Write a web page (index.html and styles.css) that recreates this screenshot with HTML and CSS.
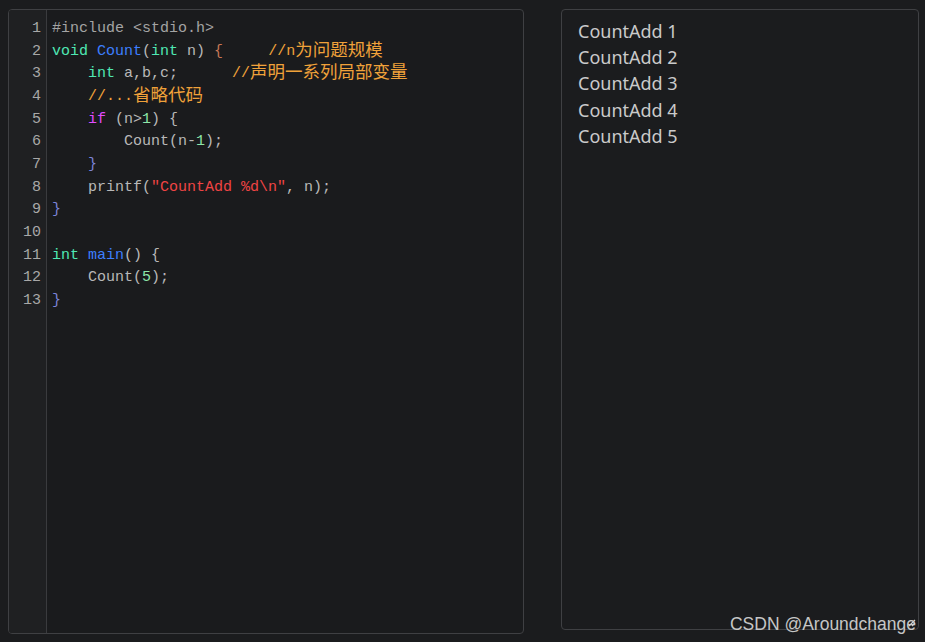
FILE: index.html
```html
<!DOCTYPE html>
<html lang="zh-CN">
<head>
    <meta charset="UTF-8">
    <title>递归调用示例</title>
    <link rel="stylesheet" href="styles.css">
</head>
<body>
    <div class="workspace">
        <div class="editor">
            <div class="gutter">
                <div>1</div><div>2</div><div>3</div><div>4</div><div>5</div>
                <div>6</div><div>7</div><div>8</div><div>9</div><div>10</div>
                <div>11</div><div>12</div><div>13</div>
            </div>
            <div class="code">
                <div class="line"><span class="pp">#include &lt;stdio.h&gt;</span></div>
                <div class="line"><span class="kw">void</span> <span class="fn">Count</span>(<span class="kw">int</span> n) <span class="br1">{</span>     <span class="cm">//n<span class="cjk">为问题规模</span></span></div>
                <div class="line">    <span class="kw">int</span> a,b,c;      <span class="cm">//<span class="cjk">声明一系列局部变量</span></span></div>
                <div class="line">    <span class="cm">//...<span class="cjk">省略代码</span></span></div>
                <div class="line">    <span class="ctl">if</span> (n&gt;<span class="num">1</span>) {</div>
                <div class="line">        Count(n-<span class="num">1</span>);</div>
                <div class="line">    <span class="br2">}</span></div>
                <div class="line">    printf(<span class="str">"CountAdd %d\n"</span>, n);</div>
                <div class="line"><span class="br2">}</span></div>
                <div class="line"></div>
                <div class="line"><span class="kw">int</span> <span class="fn">main</span>() {</div>
                <div class="line">    Count(<span class="num">5</span>);</div>
                <div class="line"><span class="br2">}</span></div>
            </div>
        </div>

        <div class="console">
            <div class="output">
                <div>CountAdd 1</div>
                <div>CountAdd 2</div>
                <div>CountAdd 3</div>
                <div>CountAdd 4</div>
                <div>CountAdd 5</div>
            </div>
            <div class="watermark">CSDN @Aroundchange</div>
            <svg class="grip" width="8" height="8" viewBox="0 0 8 8">
                <path d="M7 1 L1 7 M7 4 L4 7" stroke="#d0d0d0" stroke-width="1.2" fill="none"/>
            </svg>
        </div>
    </div>
</body>
</html>
```

FILE: styles.css
```css
body, html {
    margin: 0;
    padding: 0;
    height: 100%;
    background-color: #1b1c1e;
    overflow: hidden;
}

.workspace {
    display: flex;
    align-items: flex-start;
    gap: 37px;
    padding: 9px 0 0 8px;
}

.editor {
    display: flex;
    width: 514px;
    height: 623px;
    border: 1px solid #3f4043;
    border-radius: 4px;
    background-color: #1a1b1d;
    overflow: hidden;
}

.gutter {
    width: 38px;
    flex-shrink: 0;
    background-color: #1f2022;
    border-right: 1px solid #3a3b3e;
    padding: 8px 5px 0 0;
    box-sizing: border-box;
    text-align: right;
    font-family: "Liberation Mono", monospace;
    font-size: 15px;
    line-height: 22.67px;
    color: #a8a8a8;
}

.gutter div {
    height: 22.67px;
}

.code {
    padding: 8px 0 0 5px;
    font-family: "Liberation Mono", monospace;
    font-size: 15px;
    line-height: 22.67px;
    color: #b8b8b8;
}

.line {
    height: 22.67px;
    white-space: pre;
}

.cjk {
    font-family: "Noto Sans CJK SC", sans-serif;
    font-size: 17.5px;
    line-height: 0;
    vertical-align: -1px;
}

.pp { color: #a4a4a4; }
.kw { color: #4fe8b4; }
.fn { color: #3d7fff; }
.ctl { color: #e04cff; }
.num { color: #8ee6a8; }
.str { color: #f04444; }
.cm { color: #f0a23a; }
.br1 { color: #c77755; }
.br2 { color: #7c84d8; }

/* Output window */
.console {
    position: relative;
    width: 356px;
    height: 619px;
    border: 1px solid #3f4043;
    border-radius: 4px;
    background-color: #1b1c1e;
}

.output {
    padding: 8px 0 0 16px;
    font-family: "Noto Sans", sans-serif;
    font-size: 18px;
    line-height: 26.2px;
    color: #cacaca;
}

.watermark {
    position: absolute;
    right: 2px;
    bottom: -6px;
    font-family: "Liberation Sans", sans-serif;
    font-size: 17.5px;
    color: #c6c6c6;
}

.grip {
    position: absolute;
    right: 2px;
    bottom: 2px;
}
```
